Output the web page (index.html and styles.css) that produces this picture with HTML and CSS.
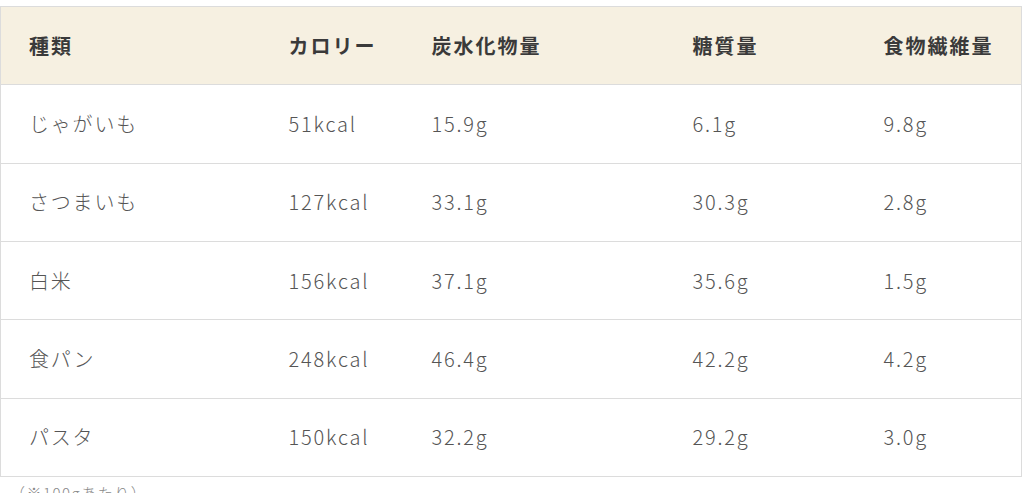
FILE: index.html
```html
<!DOCTYPE html>
<html lang="ja">
<head>
<meta charset="utf-8">
<link rel="stylesheet" href="styles.css">
</head>
<body>
<div class="wrap">
  <table class="nutri">
    <colgroup>
      <col class="c1"><col class="c2"><col class="c3"><col class="c4"><col class="c5">
    </colgroup>
    <thead>
      <tr><th>種類</th><th>カロリー</th><th>炭水化物量</th><th>糖質量</th><th>食物繊維量</th></tr>
    </thead>
    <tbody>
      <tr><td>じゃがいも</td><td>51kcal</td><td>15.9g</td><td>6.1g</td><td>9.8g</td></tr>
      <tr><td>さつまいも</td><td>127kcal</td><td>33.1g</td><td>30.3g</td><td>2.8g</td></tr>
      <tr><td>白米</td><td>156kcal</td><td>37.1g</td><td>35.6g</td><td>1.5g</td></tr>
      <tr><td>食パン</td><td>248kcal</td><td>46.4g</td><td>42.2g</td><td>4.2g</td></tr>
      <tr><td>パスタ</td><td>150kcal</td><td>32.2g</td><td>29.2g</td><td>3.0g</td></tr>
    </tbody>
  </table>
  <p class="note">（※100gあたり）</p>
</div>
</body>
</html>
```
FILE: styles.css
```css
html, body {
  margin: 0;
  padding: 0;
  background: #fff;
}
body {
  font-family: "Noto Sans CJK JP", "Noto Sans", sans-serif;
  color: #555;
}
.wrap {
  padding-top: 6px;
  width: 1021px;
}
.nutri {
  width: 1021px;
  border-collapse: collapse;
  table-layout: fixed;
  border: 1px solid #dcdcdc;
}
.c1 { width: 260px; }
.c2 { width: 143px; }
.c3 { width: 261px; }
.c4 { width: 191px; }
.c5 { width: 166px; }
.nutri th,
.nutri td {
  text-align: left;
  padding: 23.66px 0 23.66px 28px;
  line-height: 30px;
  font-size: 20px;
  border-bottom: 1px solid #dcdcdc;
  white-space: nowrap;
}
.nutri th {
  background: #f6f0e1;
  color: #3a3a3a;
  font-weight: 700;
  letter-spacing: 0.1em;
}
.nutri td {
  color: #555;
  font-weight: 300;
  letter-spacing: 0.09em;
}
.note {
  margin: 5px 0 0;
  padding-left: 10px;
  font-size: 15px;
  line-height: 22px;
  color: #888;
  font-weight: 300;
  letter-spacing: 0.1em;
}
```
